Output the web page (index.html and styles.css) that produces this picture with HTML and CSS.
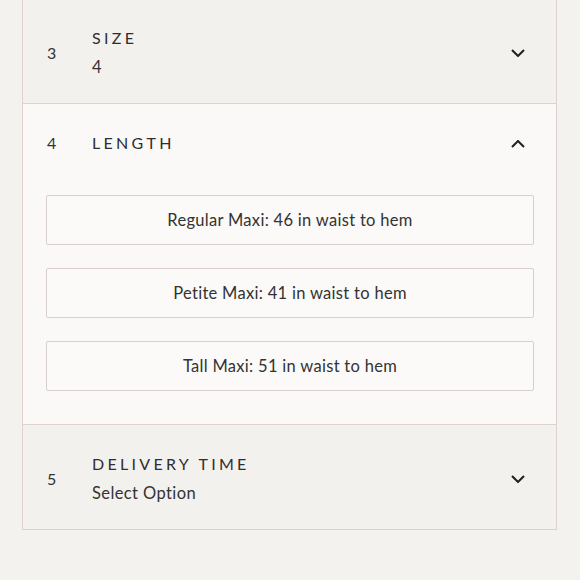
FILE: index.html
```html
<!DOCTYPE html>
<html lang="en">
<head>
<meta charset="utf-8">
<title>Options</title>
<link rel="stylesheet" href="styles.css">
</head>
<body>
<div class="panel">
  <section class="step">
    <div class="step-head">
      <span class="step-num">3</span>
      <div class="step-text">
        <div class="step-title">SIZE</div>
        <div class="step-value">4</div>
      </div>
      <svg class="chev" width="14" height="8" viewBox="0 0 14 8"><polyline points="1,1 7,7 13,1" fill="none" stroke="#1f1f1f" stroke-width="2"/></svg>
    </div>
  </section>
  <section class="step step-open">
    <div class="step-head">
      <span class="step-num">4</span>
      <div class="step-text">
        <div class="step-title">LENGTH</div>
      </div>
      <svg class="chev" width="14" height="8" viewBox="0 0 14 8"><polyline points="1,7 7,1 13,7" fill="none" stroke="#1f1f1f" stroke-width="2"/></svg>
    </div>
    <div class="options">
      <button class="option">Regular Maxi: 46 in waist to hem</button>
      <button class="option">Petite Maxi: 41 in waist to hem</button>
      <button class="option">Tall Maxi: 51 in waist to hem</button>
    </div>
  </section>
  <section class="step">
    <div class="step-head">
      <span class="step-num">5</span>
      <div class="step-text">
        <div class="step-title">DELIVERY TIME</div>
        <div class="step-value">Select Option</div>
      </div>
      <svg class="chev" width="14" height="8" viewBox="0 0 14 8"><polyline points="1,1 7,7 13,1" fill="none" stroke="#1f1f1f" stroke-width="2"/></svg>
    </div>
  </section>
</div>
</body>
</html>
```
FILE: styles.css
```css
html, body {
  margin: 0;
  padding: 0;
  background: #f4f2ef;
}
body {
  font-family: Lato, "Open Sans", sans-serif;
  color: #2b2b2b;
}
.panel {
  margin: -1px 23px 0 22px;
  border-left: 1px solid #ddd2cf;
  border-right: 1px solid #ddd2cf;
}
.step {
  background: #f3f1ed;
  border-bottom: 1px solid #ddd2cf;
}
.step-open {
  background: #faf9f7;
  padding-bottom: 33px;
}
.step-head {
  display: flex;
  align-items: center;
  padding: 27px 31px 24px 24px;
}
.step-open .step-head {
  align-items: flex-start;
  padding-bottom: 0;
}
.step-num {
  width: 45px;
  font-size: 16px;
  line-height: 24px;
  color: #333;
}
.step-text {
  flex: 1;
}
.step-title {
  font-size: 16px;
  line-height: 24px;
  letter-spacing: 3.3px;
  color: #2e2e2e;
}
.step-value {
  font-size: 16.5px;
  line-height: 24px;
  letter-spacing: 0.4px;
  margin-top: 5px;
  color: #333;
}
.step-open .chev {
  margin-top: 9px;
}
.options {
  display: flex;
  flex-direction: column;
  gap: 23px;
  margin-top: 40px;
  padding: 0 22px 0 23px;
}
.option {
  height: 50px;
  background: #fbfaf8;
  border: 1px solid #d9cfcc;
  border-radius: 2px;
  font-family: Lato, "Open Sans", sans-serif;
  font-size: 16.5px;
  letter-spacing: 0.3px;
  color: #333;
}
```
